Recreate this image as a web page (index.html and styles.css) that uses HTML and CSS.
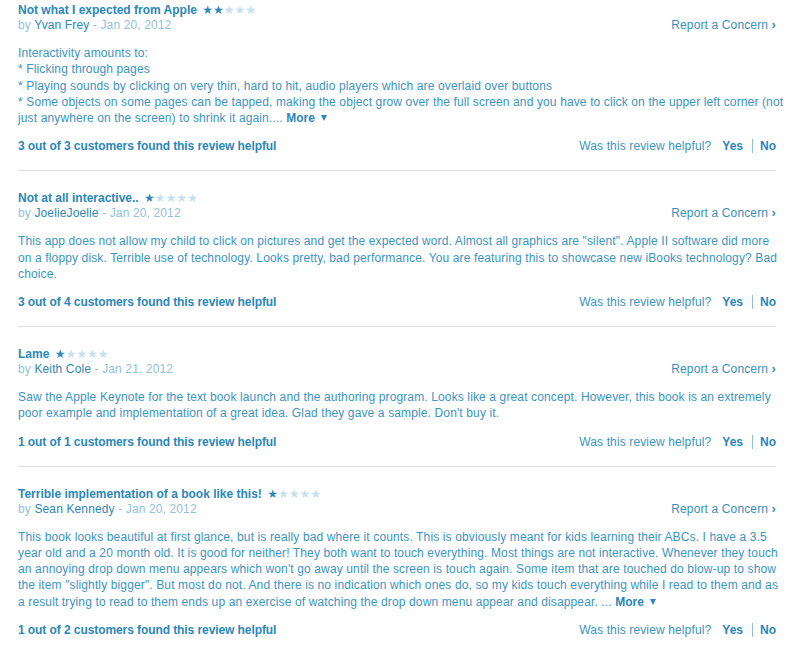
FILE: index.html
```
<!DOCTYPE html>
<html>
<head>
<meta charset="utf-8">
<link rel="stylesheet" href="styles.css">
</head>
<body>
<div class="reviews">
  <div class="review">
    <div class="head">
      <div class="meta">
        <div class="title">Not what I expected from Apple <span class="stars"><span class="on">★★</span><span class="off">★★★</span></span></div>
        <div class="byline">by <span class="author">Yvan Frey</span> - Jan 20, 2012</div>
      </div>
      <a class="report">Report a Concern <span class="chev">›</span></a>
    </div>
    <div class="text">Interactivity amounts to:<br>* Flicking through pages<br>* Playing sounds by clicking on very thin, hard to hit, audio players which are overlaid over buttons<br>* Some objects on some pages can be tapped, making the object grow over the full screen and you have to click on the upper left corner (not just anywhere on the screen) to shrink it again.... <a class="more">More</a><span class="tri"></span></div>
    <div class="foot">
      <div class="count">3 out of 3 customers found this review helpful</div>
      <div class="vote">Was this review helpful? <a class="yes">Yes</a><span class="sep"></span><a class="no">No</a></div>
    </div>
  </div>

  <div class="review">
    <div class="head">
      <div class="meta">
        <div class="title">Not at all interactive.. <span class="stars"><span class="on">★</span><span class="off">★★★★</span></span></div>
        <div class="byline">by <span class="author">JoelieJoelie</span> - Jan 20, 2012</div>
      </div>
      <a class="report">Report a Concern <span class="chev">›</span></a>
    </div>
    <div class="text">This app does not allow my child to click on pictures and get the expected word. Almost all graphics are "silent". Apple II software did more on a floppy disk. Terrible use of technology. Looks pretty, bad performance. You are featuring this to showcase new iBooks technology? Bad choice.</div>
    <div class="foot">
      <div class="count">3 out of 4 customers found this review helpful</div>
      <div class="vote">Was this review helpful? <a class="yes">Yes</a><span class="sep"></span><a class="no">No</a></div>
    </div>
  </div>

  <div class="review">
    <div class="head">
      <div class="meta">
        <div class="title">Lame <span class="stars"><span class="on">★</span><span class="off">★★★★</span></span></div>
        <div class="byline">by <span class="author">Keith Cole</span> - Jan 21, 2012</div>
      </div>
      <a class="report">Report a Concern <span class="chev">›</span></a>
    </div>
    <div class="text">Saw the Apple Keynote for the text book launch and the authoring program. Looks like a great concept. However, this book is an extremely poor example and implementation of a great idea. Glad they gave a sample. Don't buy it.</div>
    <div class="foot">
      <div class="count">1 out of 1 customers found this review helpful</div>
      <div class="vote">Was this review helpful? <a class="yes">Yes</a><span class="sep"></span><a class="no">No</a></div>
    </div>
  </div>

  <div class="review">
    <div class="head">
      <div class="meta">
        <div class="title">Terrible implementation of a book like this! <span class="stars"><span class="on">★</span><span class="off">★★★★</span></span></div>
        <div class="byline">by <span class="author">Sean Kennedy</span> - Jan 20, 2012</div>
      </div>
      <a class="report">Report a Concern <span class="chev">›</span></a>
    </div>
    <div class="text">This book looks beautiful at first glance, but is really bad where it counts. This is obviously meant for kids learning their ABCs. I have a 3.5 year old and a 20 month old. It is good for neither! They both want to touch everything. Most things are not interactive. Whenever they touch an annoying drop down menu appears which won't go away until the screen is touch again. Some item that are touched do blow-up to show the item "slightly bigger". But most do not. And there is no indication which ones do, so my kids touch everything while I read to them and as a result trying to read to them ends up an exercise of watching the drop down menu appear and disappear. ... <a class="more">More</a><span class="tri"></span></div>
    <div class="foot">
      <div class="count">1 out of 2 customers found this review helpful</div>
      <div class="vote">Was this review helpful? <a class="yes">Yes</a><span class="sep"></span><a class="no">No</a></div>
    </div>
  </div>
</div>
</body>
</html>
```

FILE: styles.css
```
html, body {
  margin: 0;
  padding: 0;
  background: #ffffff;
}

body {
  font-family: "Liberation Sans", Arial, Helvetica, sans-serif;
  font-size: 12px;
  letter-spacing: 0.13px;
  color: #3a93c5;
}

.reviews {
  margin-left: 18px;
  width: 766px;
}

.review {
  padding: 20px 0 16px;
  border-bottom: 1px solid #e0e0e0;
  margin-right: 8px;
}

.review:first-child {
  padding-top: 3px;
}

.review:last-child {
  border-bottom: none;
}

.head {
  display: flex;
  justify-content: space-between;
  align-items: flex-end;
}

.title {
  font-weight: bold;
  letter-spacing: 0;
  line-height: 15px;
  color: #2a87bb;
}

.stars {
  font-family: "DejaVu Sans", sans-serif;
  font-weight: normal;
  font-size: 12px;
  letter-spacing: 0;
  margin-left: 2px;
}

.stars .on {
  color: #3487bc;
}

.stars .off {
  color: #c4e0f0;
}

.byline {
  line-height: 15px;
  color: #90c2de;
}

.author {
  color: #2f88ba;
}

.report {
  line-height: 15px;
  color: #3a8fc2;
}

.chev {
  font-weight: bold;
  font-size: 13px;
}

.text {
  margin-top: 12px;
  line-height: 16.25px;
  margin-right: -8px;
  color: #3b94c6;
}

.more {
  font-weight: bold;
  letter-spacing: 0;
  color: #2a87bb;
}

.tri {
  display: inline-block;
  width: 0;
  height: 0;
  border-left: 3.5px solid transparent;
  border-right: 3.5px solid transparent;
  border-top: 6px solid #2a87bb;
  margin-left: 6px;
  vertical-align: 1px;
}

.foot {
  margin-top: 12px;
  display: flex;
  justify-content: space-between;
  align-items: center;
  line-height: 16px;
}

.count {
  font-weight: bold;
  letter-spacing: -0.08px;
  color: #2a87bb;
}

.vote {
  display: flex;
  align-items: center;
  color: #3a93c5;
}

.yes, .no {
  font-weight: bold;
  letter-spacing: 0;
  color: #2a87bb;
}

.yes {
  margin-left: 11px;
}

.sep {
  display: inline-block;
  width: 1px;
  height: 14px;
  background: #8fc1de;
  margin: 0 7px 0 9px;
}
```
